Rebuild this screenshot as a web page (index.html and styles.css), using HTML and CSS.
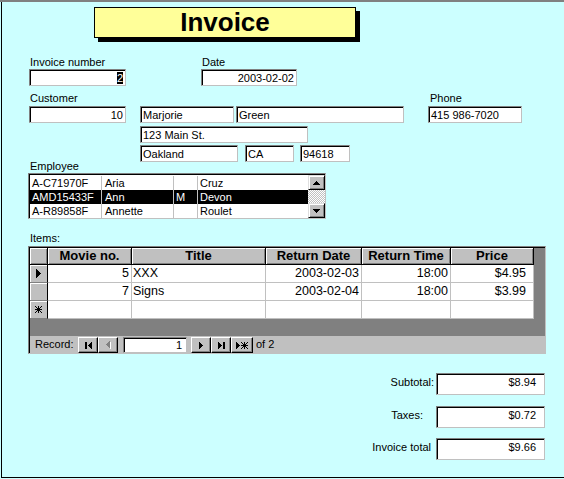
FILE: index.html
```html
<!DOCTYPE html>
<html>
<head>
<meta charset="utf-8">
<title>Invoice</title>
<link rel="stylesheet" href="styles.css">
</head>
<body>
<div class="window">
 <div class="form">
  <div class="title-row"><div class="title">Invoice</div></div>

  <div class="row-top">
   <div class="fld-invno">
    <div class="lbl">Invoice number</div>
    <div class="box num"><span class="sel">2</span></div>
   </div>
   <div class="fld-date">
    <div class="lbl">Date</div>
    <div class="box num">2003-02-02</div>
   </div>
  </div>

  <div class="cust">
   <div class="fld-cust">
    <div class="lbl">Customer</div>
    <div class="box num after-lbl">10</div>
    <div class="lbl lbl-emp">Employee</div>
   </div>
   <div class="addr">
    <div class="addr-row">
     <div class="box b-first">Marjorie</div>
     <div class="box b-last">Green</div>
    </div>
    <div class="addr-row addr-r2">
     <div class="box b-street">123 Main St.</div>
    </div>
    <div class="addr-row addr-r3">
     <div class="box b-city">Oakland</div>
     <div class="box b-state">CA</div>
     <div class="box b-zip">94618</div>
    </div>
   </div>
   <div class="fld-phone">
    <div class="lbl">Phone</div>
    <div class="box after-lbl">415 986-7020</div>
   </div>
  </div>

  <div class="listbox">
   <div class="lrows">
    <div class="lrow"><div class="lc c1">A-C71970F</div><div class="lc c2">Aria</div><div class="lc c3"></div><div class="lc c4">Cruz</div></div>
    <div class="lrow lsel"><div class="lc c1">AMD15433F</div><div class="lc c2">Ann</div><div class="lc c3">M</div><div class="lc c4">Devon</div></div>
    <div class="lrow"><div class="lc c1">A-R89858F</div><div class="lc c2">Annette</div><div class="lc c3"></div><div class="lc c4">Roulet</div></div>
   </div>
   <div class="sbar">
    <div class="sbtn"><svg width="7" height="4" viewBox="0 0 7 4" shape-rendering="crispEdges"><path d="M3 0h1v1h-1zM2 1h3v1h-3zM1 2h5v1h-5zM0 3h7v1h-7z"/></svg></div>
    <div class="strack"></div>
    <div class="sbtn"><svg width="7" height="4" viewBox="0 0 7 4" shape-rendering="crispEdges"><path d="M0 0h7v1h-7zM1 1h5v1h-5zM2 2h3v1h-3zM3 3h1v1h-1z"/></svg></div>
   </div>
  </div>

  <div class="lbl items-lbl">Items:</div>

  <div class="subform">
   <div class="sheet">
    <div class="grid">
     <div class="hc"></div>
     <div class="hc">Movie no.</div>
     <div class="hc">Title</div>
     <div class="hc">Return Date</div>
     <div class="hc">Return Time</div>
     <div class="hc">Price</div>

     <div class="rs"><svg width="5" height="9" viewBox="0 0 5 9" shape-rendering="crispEdges"><path d="M0 0h1v9h-1zM1 1h1v7h-1zM2 2h1v5h-1zM3 3h1v3h-1zM4 4h1v1h-1z"/></svg></div>
     <div class="dc num">5</div>
     <div class="dc">XXX</div>
     <div class="dc num">2003-02-03</div>
     <div class="dc num">18:00</div>
     <div class="dc num cur">$4.95</div>

     <div class="rs"></div>
     <div class="dc num">7</div>
     <div class="dc">Signs</div>
     <div class="dc num">2003-02-04</div>
     <div class="dc num">18:00</div>
     <div class="dc num cur">$3.99</div>

     <div class="rs"><svg width="7" height="7" viewBox="0 0 7 7" shape-rendering="crispEdges"><path d="M3 0h1v7h-1zM0 3h7v1h-7zM0 0h1v1h-1zM1 1h1v1h-1zM2 2h1v1h-1zM4 4h1v1h-1zM5 5h1v1h-1zM6 6h1v1h-1zM6 0h1v1h-1zM5 1h1v1h-1zM4 2h1v1h-1zM2 4h1v1h-1zM1 5h1v1h-1zM0 6h1v1h-1z"/></svg></div>
     <div class="dc"></div>
     <div class="dc"></div>
     <div class="dc"></div>
     <div class="dc"></div>
     <div class="dc"></div>
    </div>
   </div>
   <div class="nav">
    <span class="nav-lbl">Record:</span>
    <div class="nbtn"><svg width="7" height="7" viewBox="0 0 7 7" shape-rendering="crispEdges"><path d="M0 0h2v7h-2zM3 3h1v1h-1zM4 2h1v3h-1zM5 1h1v5h-1zM6 0h1v7h-1z"/></svg></div>
    <div class="nbtn"><svg width="5" height="8" viewBox="0 0 5 8" shape-rendering="crispEdges"><path fill="#fff" d="M1 4h1v1h-1zM2 3h1v3h-1zM3 2h1v5h-1zM4 1h1v7h-1z"/><path fill="#808080" d="M0 3h1v1h-1zM1 2h1v3h-1zM2 1h1v5h-1zM3 0h1v7h-1z"/></svg></div>
    <div class="nav-input">1</div>
    <div class="nbtn nbtn-next"><svg width="4" height="7" viewBox="0 0 4 7" shape-rendering="crispEdges"><path d="M0 0h1v7h-1zM1 1h1v5h-1zM2 2h1v3h-1zM3 3h1v1h-1z"/></svg></div>
    <div class="nbtn"><svg width="7" height="7" viewBox="0 0 7 7" shape-rendering="crispEdges"><path d="M0 0h1v7h-1zM1 1h1v5h-1zM2 2h1v3h-1zM3 3h1v1h-1zM5 0h2v7h-2z"/></svg></div>
    <div class="nbtn nbtn-new"><svg width="12" height="7" viewBox="0 0 12 7" shape-rendering="crispEdges"><path d="M0 0h1v7h-1zM1 1h1v5h-1zM2 2h1v3h-1zM3 3h1v1h-1zM8 0h1v7h-1zM5 3h7v1h-7zM5 0h1v1h-1zM6 1h1v1h-1zM7 2h1v1h-1zM9 4h1v1h-1zM10 5h1v1h-1zM11 6h1v1h-1zM11 0h1v1h-1zM10 1h1v1h-1zM9 2h1v1h-1zM7 4h1v1h-1zM6 5h1v1h-1zM5 6h1v1h-1z"/></svg></div>
    <span class="nav-of">of 2</span>
   </div>
  </div>

  <div class="totals">
   <div class="tot-row">
    <div class="tot-lbl tl-sub">Subtotal:</div>
    <div class="box num tot-box">$8.94</div>
   </div>
   <div class="tot-row tr-gap1">
    <div class="tot-lbl tl-tax">Taxes:</div>
    <div class="box num tot-box">$0.72</div>
   </div>
   <div class="tot-row tr-gap2">
    <div class="tot-lbl tl-total">Invoice total</div>
    <div class="box num tot-box">$9.66</div>
   </div>
  </div>
 </div>
</div>
</body>
</html>
```

FILE: styles.css
```css
* { box-sizing: border-box; }
html, body { margin: 0; padding: 0; }
body {
  width: 564px;
  height: 479px;
  overflow: hidden;
  background: #ccffff;
  font-family: "Liberation Sans", Arial, sans-serif;
  font-size: 11px;
  color: #000;
}
.window {
  width: 564px;
  height: 479px;
  border-top: 2px solid #808080;
  padding-left: 1px;
  background: #ccffff;
}
.form {
  height: 476px;
  border-left: 1px solid #000;
  border-bottom: 1px solid #000;
}

/* title */
.title-row { padding: 5px 0 0 92px; }
.title {
  width: 262px;
  height: 31px;
  border: 1px solid #000;
  background: #ffff99;
  box-shadow: 4px 4px 0 #000;
  font-size: 26px;
  font-weight: bold;
  line-height: 29px;
  text-align: center;
}

/* generic label and sunken text box */
.lbl {
  height: 13px;
  line-height: 13px;
  padding-left: 1px;
  white-space: nowrap;
}
.box {
  height: 17px;
  background: #fff;
  border: 1px solid;
  border-color: #808080 #c0c0c0 #c0c0c0 #808080;
  box-shadow: inset 1px 1px 0 #000;
  padding: 2px 2px 0 2px;
  line-height: 13px;
  white-space: nowrap;
  overflow: hidden;
}
.num { text-align: right; }
.sel { background: #000; color: #fff; }
.after-lbl { margin-top: 1px; }

/* top row */
.row-top {
  display: flex;
  margin-top: 18px;
  padding-left: 27px;
}
.fld-invno { width: 97px; }
.fld-date { width: 96px; margin-left: 75px; }

/* customer block */
.cust {
  display: flex;
  align-items: flex-start;
  margin-top: 6px;
  padding-left: 27px;
}
.fld-cust { width: 97px; }
.lbl-emp { margin-top: 37px; }
.addr { margin-left: 14px; margin-top: 14px; }
.addr-row { display: flex; }
.addr-r2 { margin-top: 3px; }
.addr-r3 { margin-top: 2px; }
.b-first { width: 94px; }
.b-last { width: 168px; margin-left: 2px; }
.b-street { width: 168px; }
.b-city { width: 98px; }
.b-state { width: 49px; margin-left: 7px; }
.b-zip { width: 50px; margin-left: 6px; }
.fld-phone { width: 94px; margin-left: 24px; }
.fld-phone .lbl { padding-left: 2px; }

/* employee list box */
.listbox {
  display: flex;
  margin-left: 26px;
  width: 298px;
  height: 46px;
  background: #fff;
  border: 1px solid;
  border-color: #808080 #c0c0c0 #c0c0c0 #808080;
  box-shadow: inset 1px 1px 0 #000;
  padding: 1px 0 0 1px;
}
.lrows { width: 278px; padding-top: 1px; }
.lrow { display: flex; height: 14px; line-height: 14px; }
.lsel { background: #000; color: #fff; }
.lc {
  height: 14px;
  padding-left: 2px;
  border-right: 1px solid #c0c0c0;
  white-space: nowrap;
  overflow: hidden;
}
.c1 { width: 72px; }
.c2 { width: 72px; padding-left: 3px; }
.c3 { width: 24px; }
.c4 { width: 110px; border-right: none; }
.sbar {
  width: 17px;
  height: 43px;
  display: flex;
  flex-direction: column;
}
.sbtn {
  height: 15px;
  display: flex;
  align-items: center;
  justify-content: center;
  background: #c0c0c0;
  border: 1px solid;
  border-color: #dfdfdf #000 #000 #dfdfdf;
  box-shadow: inset 1px 1px 0 #fff, inset -1px -1px 0 #808080;
}
.strack {
  flex: 1;
  background: repeating-conic-gradient(#c0c0c0 0 25%, #ffffff 0 50%) 0 0 / 2px 2px;
}

/* items subform */
.items-lbl { margin: 13px 0 0 27px; }
.subform {
  margin: 1px 0 0 26px;
  width: 518px;
  height: 108px;
  border: 1px solid;
  border-color: #808080 #c0c0c0 #c0c0c0 #808080;
  background: #808080;
  box-shadow: inset 1px 1px 0 #000;
  padding: 1px 0 0 1px;
}
.sheet {
  height: 88px;
  background: #808080;
}
.grid {
  display: grid;
  grid-template-columns: 18px 84px 134px 96px 89px 83px;
  grid-template-rows: 17px 18px 18px 18px;
  width: 504px;
}
.hc {
  background: #c0c0c0;
  border-right: 1px solid #000;
  border-bottom: 1px solid #000;
  box-shadow: inset 1px 1px 0 #fff, inset -1px -1px 0 #808080;
  font-size: 13px;
  font-weight: bold;
  line-height: 16px;
  text-align: center;
  white-space: nowrap;
  overflow: hidden;
}
.rs {
  background: #c0c0c0;
  border-right: 1px solid #000;
  border-bottom: 1px solid #808080;
  box-shadow: inset 1px 1px 0 #fff;
  display: flex;
  align-items: center;
  justify-content: center;
}
.dc {
  background: #fff;
  border-right: 1px solid #c0c0c0;
  border-bottom: 1px solid #c0c0c0;
  font-size: 12.5px;
  line-height: 17px;
  padding: 0 2px 0 1px;
  white-space: nowrap;
  overflow: hidden;
}
.cur { padding-right: 7px; }

/* record navigation */
.nav {
  height: 17px;
  background: #c0c0c0;
  display: flex;
  align-items: center;
  line-height: 17px;
}
.nav-lbl { width: 48px; padding-left: 5px; }
.nbtn {
  width: 20px;
  height: 16px;
  margin-top: 1px;
  display: flex;
  align-items: center;
  justify-content: center;
  background: #c0c0c0;
  border: 1px solid;
  border-color: #fff #000 #000 #fff;
  box-shadow: inset -1px -1px 0 #808080;
}
.nbtn-next { margin-left: 4px; }
.nbtn-new { width: 22px; }
.nav-input {
  width: 64px;
  height: 16px;
  margin: 1px 0 0 5px;
  background: #fff;
  border: 1px solid;
  border-color: #808080 #c0c0c0 #c0c0c0 #808080;
  box-shadow: inset 1px 1px 0 #000;
  text-align: right;
  padding-right: 4px;
  line-height: 14px;
}
.nav-of { margin-left: 3px; }

/* totals */
.totals { margin: 19px 0 0 368px; }
.tot-row { display: flex; align-items: flex-start; }
.tr-gap1 { margin-top: 11px; }
.tr-gap2 { margin-top: 10px; }
.tot-lbl {
  width: 66px;
  padding-top: 3px;
  line-height: 13px;
  text-align: right;
  white-space: nowrap;
}
.tl-sub { padding-right: 2px; }
.tl-tax { padding-right: 13px; }
.tl-total { padding-right: 5px; }
.tot-box {
  width: 109px;
  height: 22px;
  padding: 2px 8px 0 2px;
}
```
